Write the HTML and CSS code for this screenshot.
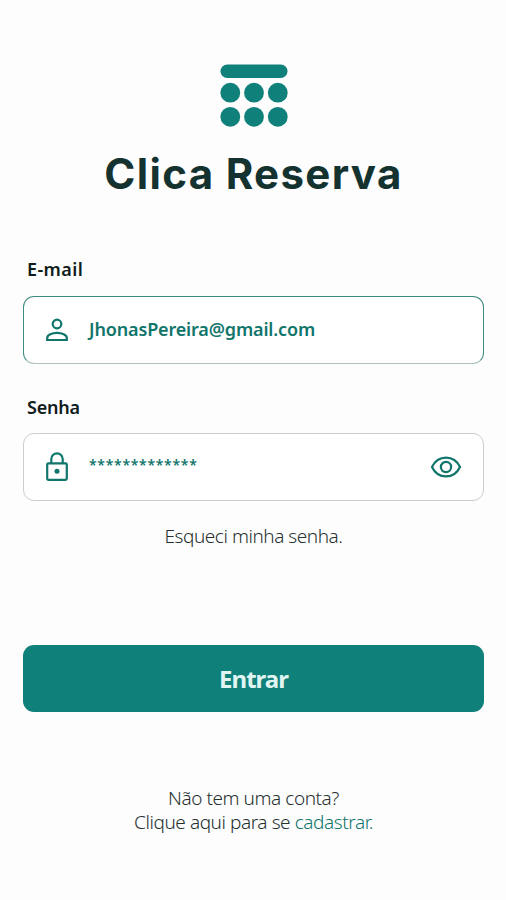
FILE: index.html
```
<!DOCTYPE html>
<html lang="pt-BR">
<head>
    <meta charset="UTF-8" />
    <meta name="viewport" content="width=device-width, initial-scale=1" />
    <title>Clica Reserva</title>
    <link rel="stylesheet" href="styles.css">
</head>
<body>
    <header>
        <svg class="logo" width="68" height="64" viewBox="0 0 68 64">
            <rect x="0.5" y="0.5" width="67" height="13.5" rx="6.75" />
            <circle cx="10.3" cy="28.7" r="9.9" />
            <circle cx="34" cy="28.7" r="9.9" />
            <circle cx="57.8" cy="28.7" r="9.9" />
            <circle cx="10.3" cy="52.8" r="9.9" />
            <circle cx="34" cy="52.8" r="9.9" />
            <circle cx="57.8" cy="52.8" r="9.9" />
        </svg>
        <h1>Clica Reserva</h1>
    </header>
    <main>
        <div class="label label-email">E-mail</div>
        <div class="field active">
            <svg class="icon" width="24" height="24" viewBox="0 0 24 24">
                <circle cx="12" cy="6" r="4.3" />
                <path d="M2.2 22v-2c0-3.2 4.8-5.2 9.8-5.2s9.8 2 9.8 5.2v2z" />
            </svg>
            <span class="email">JhonasPereira@gmail.com</span>
        </div>
        <div class="label">Senha</div>
        <div class="field">
            <svg class="icon" width="24" height="30" viewBox="0 0 24 30">
                <rect x="2.2" y="11.4" width="19.6" height="16.4" rx="1.2" />
                <path d="M6.3 11.4V7.1a5.700 5.700 0 0 1 11.400 0v4.300" />
                <circle class="dot" cx="12" cy="19.3" r="2.5" />
            </svg>
            <span class="password">*************</span>
            <svg class="icon eye" width="32" height="22" viewBox="0 0 32 22">
                <path d="M2 11C4.8 5 10.3 1.6 16 1.6S27.2 5 30 11C27.2 17 21.7 20.4 16 20.4S4.8 17 2 11z" />
                <circle cx="16" cy="11" r="5.1" />
            </svg>
        </div>
        <p class="forgot">Esqueci minha senha.</p>
        <button>Entrar</button>
        <p class="signup">Não tem uma conta?<br>Clique aqui para se <a>cadastrar.</a></p>
    </main>
</body>
</html>
```
FILE: styles.css
```
* { box-sizing: border-box; }
body { margin: 0; padding: 64px 22px 0 23px; height: 900px; background: #fdfdfd; color: #101c1b; font-family: "Noto Sans", "Open Sans", sans-serif; }
header { text-align: center; }
.logo { display: block; margin: 0 auto; fill: #10807a; }
h1 { margin: 20px 0 0; font: 700 42px/52px Inter, sans-serif; color: #14322f; white-space: nowrap; letter-spacing: 1.35px; }
.label { height: 28px; margin: 30px 0 11px 4px; font-size: 18px; font-weight: 600; line-height: 26px; letter-spacing: -0.2px; }
.label-email { margin-top: 57px; line-height: 25px; letter-spacing: 0.4px; }
.field { display: flex; align-items: center; height: 68px; padding: 0 21px; border: 1px solid #c9cdcc; border-radius: 11px; background: #fff; color: #10756b; }
.field.active { border-color: #3f8a80; border-bottom-color: #a9c2be; }
.icon { fill: none; stroke: #10756b; stroke-width: 2.2; }
.icon .dot { fill: #10756b; stroke: none; }
.email, .password { margin-left: 20px; font-weight: 600; white-space: nowrap; }
.email { font-size: 18px; line-height: 24px; letter-spacing: -0.15px; padding-bottom: 2px; }
.password { font-size: 14px; letter-spacing: 0.7px; padding-bottom: 5px; }
.eye { margin-left: auto; }
.forgot { margin: 21px 0 0; text-align: center; font-size: 19px; font-weight: 300; line-height: 28px; letter-spacing: -0.45px; color: #26302f; }
button { display: block; width: 100%; height: 67px; margin: 95px 0 0; border: 0; border-radius: 11px; background: #10807a; color: #e0f5f2; font: 700 24px/30px "Noto Sans", sans-serif; letter-spacing: -1px; }
.signup { margin: 74px 0 0; text-align: center; font-size: 19px; font-weight: 300; line-height: 24px; letter-spacing: -0.43px; white-space: nowrap; color: #26302f; }
.signup a { color: #10756b; }
```
